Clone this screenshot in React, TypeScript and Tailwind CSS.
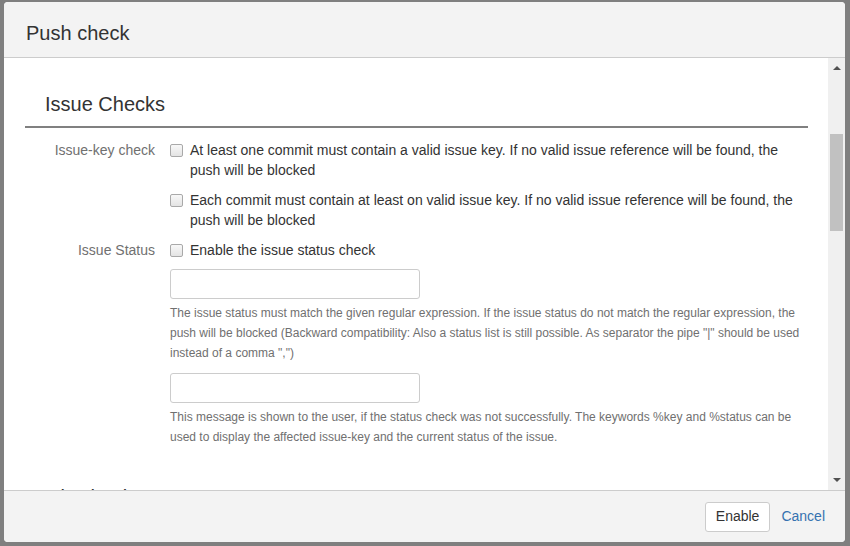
// Push check dialog
const labelCls = 'w-[130px] shrink-0 text-right text-[14px] leading-5 text-[#707070]';

function Checkbox() {
  return (
    <span className="mt-[4px] h-[13px] w-[13px] shrink-0 rounded-[2px] border border-[#a9a9a9] bg-linear-to-b from-[#f8f8f8] to-[#e4e4e4]" />
  );
}

function CheckItem({ text }: { text: string }) {
  return (
    <label className="flex items-start gap-[7px] text-[14px] leading-5 text-[#333]">
      <Checkbox />
      <span className="flex-1">{text}</span>
    </label>
  );
}

function Arrow({ down }: { down?: boolean }) {
  return (
    <svg width="8" height="4" viewBox="0 0 8 4" className={down ? 'rotate-180' : ''}>
      <polygon points="0,4 8,4 4,0" fill="#505050" />
    </svg>
  );
}

function Scrollbar() {
  return (
    <div className="flex w-[17px] shrink-0 flex-col bg-[#f0f0f0]">
      <div className="flex h-[20px] items-center justify-center">
        <Arrow />
      </div>
      <div className="mx-[2px] mt-[56px] h-[97px] bg-[#c1c1c1]" />
      <div className="flex-1" />
      <div className="flex h-[20px] items-center justify-center">
        <Arrow down />
      </div>
    </div>
  );
}

function TextInput() {
  return <div className="h-[30px] w-[250px] rounded-[3px] border border-[#cccccc] bg-white" />;
}

function SectionHeading({ title }: { title: string }) {
  return (
    <h2 className="border-b-2 border-[#808080] pb-[10px] pl-[20px] text-[20px] leading-6 text-[#333]">{title}</h2>
  );
}

export default function App() {
  return (
    <div className="h-[546px] w-[850px] overflow-hidden bg-[#7f7f7f] pt-[2px] pl-[4px] font-['Liberation_Sans',Arial,sans-serif]">
      <div className="flex h-[540px] w-[841px] flex-col overflow-hidden rounded-[4px] bg-white">
        {/* header */}
        <div className="h-[56px] shrink-0 border-b border-[#cccccc] bg-[#f3f3f3] pt-[19px] pr-5 pl-[22px]">
          <h1 className="text-[20px] leading-6 text-[#333]">Push check</h1>
        </div>

        {/* body */}
        <div className="flex min-h-0 flex-1">
          <div className="min-w-0 flex-1 overflow-hidden pt-[34px] pr-[20px] pl-[21px]">
            <SectionHeading title="Issue Checks" />

            <div className="mt-[12px] flex">
              <div className={labelCls}>Issue-key check</div>
              <div className="ml-[15px] flex flex-1 flex-col gap-[10px]">
                <CheckItem text="At least one commit must contain a valid issue key. If no valid issue reference will be found, the push will be blocked" />
                <CheckItem text="Each commit must contain at least on valid issue key. If no valid issue reference will be found, the push will be blocked" />
              </div>
            </div>

            <div className="mt-[10px] flex">
              <div className={labelCls}>Issue Status</div>
              <div className="ml-[15px] flex flex-1 flex-col">
                <CheckItem text="Enable the issue status check" />
                <div className="mt-[9px]">
                  <TextInput />
                </div>
                <p className="mt-[4px] text-[12px] leading-5 text-[#707070]">
                  The issue status must match the given regular expression. If the issue status do not match the regular expression, the push will be blocked (Backward compatibility: Also a status list is still possible. As separator the pipe "|" should be used instead of a comma ",")
                </p>
                <div className="mt-[10px]">
                  <TextInput />
                </div>
                <p className="mt-[4px] text-[12px] leading-5 text-[#707070]">
                  This message is shown to the user, if the status check was not successfully. The keywords %key and %status can be used to display the affected issue-key and the current status of the issue.
                </p>
              </div>
            </div>

            <div className="mt-[38px]">
              <SectionHeading title="Git Checks" />
            </div>
          </div>
          <Scrollbar />
        </div>

        {/* footer */}
        <div className="flex h-[52px] shrink-0 items-center justify-end gap-[11px] border-t border-[#cccccc] bg-[#f3f3f3] pr-[20px]">
          <button className="h-[30px] rounded-[3px] border border-[#cccccc] bg-white px-[10px] text-[14px] text-[#333]">
            Enable
          </button>
          <a className="text-[14px] text-[#3572b0]">Cancel</a>
        </div>
      </div>
    </div>
  );
}
